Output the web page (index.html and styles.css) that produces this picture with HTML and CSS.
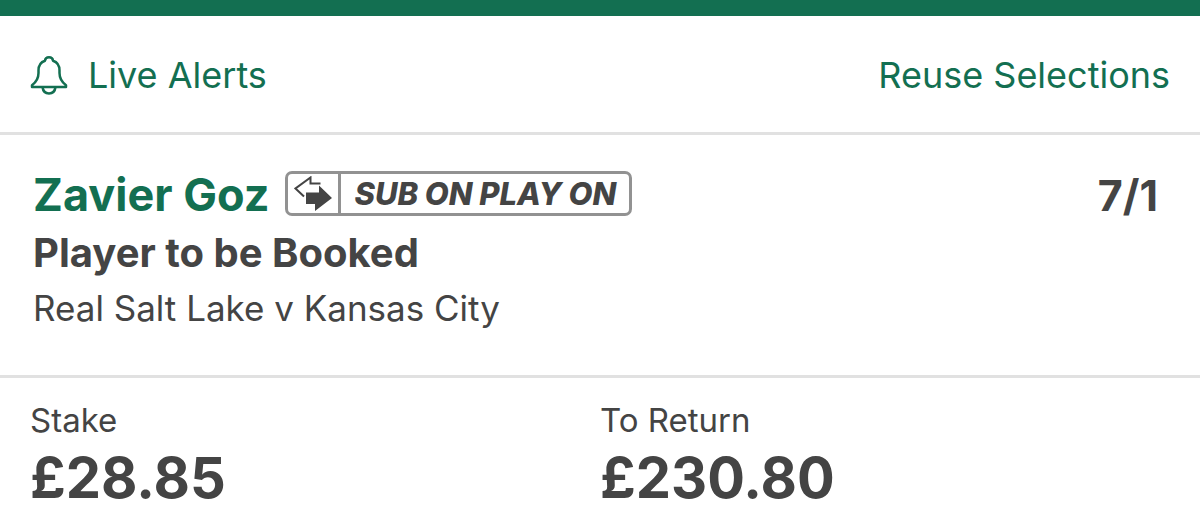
FILE: index.html
```html
<!DOCTYPE html>
<html lang="en">
<head>
    <meta charset="UTF-8">
    <meta name="viewport" content="width=device-width, initial-scale=1.0">
    <title>My Bets</title>
    <link rel="stylesheet" href="styles.css">
</head>
<body>
    <div class="bet">
        <div class="bet-header">
            <button type="button" class="header-button">
                <svg class="bell" viewBox="0 0 38 40" aria-hidden="true">
                    <path d="M2 32V30.200C7 26.500 8.500 23.500 8.500 18V15.500C8.500 10 11 7 15 5.700C15.200 3.500 16.500 2.300 19 2.300S22.800 3.500 23 5.700C27 7 29.500 10 29.500 15.500V18C29.500 23.500 31 26.500 36 30.200V32Z"/>
                    <path d="M12.500 32C13 36 15.500 38.500 19 38.500S25 36 25.500 32"/>
                </svg>
                Live Alerts
            </button>
            <button type="button" class="header-button">Reuse Selections</button>
        </div>
        <div class="selection">
            <div class="selection-row">
                <span class="player">Zavier Goz</span>
                <span class="badge">
                    <span class="badge-icon">
                        <svg class="arrows" viewBox="0 0 38 36" aria-hidden="true">
                            <path class="arrow-out" d="M10 20.500L1.500 12.500L16.500 1.500V7.500H26.500"/>
                            <path class="arrow-in" d="M12 16.500H25V9.500L38 22L21 35V28H12Z"/>
                        </svg>
                    </span>
                    <span class="badge-text">SUB ON PLAY ON</span>
                </span>
                <span class="odds">7/1</span>
            </div>
            <div class="market">Player to be Booked</div>
            <div class="fixture">Real Salt Lake v Kansas City</div>
        </div>
        <div class="totals">
            <div class="total">
                <div class="total-label">Stake</div>
                <div class="total-value">£28.85</div>
            </div>
            <div class="total">
                <div class="total-label">To Return</div>
                <div class="total-value">£230.80</div>
            </div>
        </div>
    </div>
</body>
</html>
```
FILE: styles.css
```css
body {
    margin: 0;
    background-color: #fff;
    color: #444;
    font-family: Inter, "Liberation Sans", sans-serif;
}
.bet {
    border-top: 16px solid #136f51;
}
.bet-header {
    display: flex;
    justify-content: space-between;
    align-items: center;
    padding: 35px 30px 33px;
    border-bottom: 3px solid #e1e1e1;
}
.header-button {
    display: flex;
    align-items: center;
    gap: 20px;
    padding: 0;
    border: none;
    background: none;
    color: #136f51;
    font-family: inherit;
    font-size: 36px;
    line-height: 48px;
    cursor: pointer;
}
.bell {
    width: 38px;
    height: 40px;
    fill: none;
    stroke: #136f51;
    stroke-width: 2.5;
    stroke-linejoin: round;
}
.selection {
    padding: 36px 42px 38px 33px;
    border-bottom: 3px solid #e1e1e1;
}
.selection-row {
    display: flex;
    align-items: flex-start;
    gap: 16px;
    line-height: 48px;
    font-size: 45px;
    font-weight: 700;
}
.player {
    color: #136f51;
}
.badge {
    display: flex;
    box-sizing: border-box;
    height: 45px;
    border: 3px solid #929292;
    border-radius: 7px;
}
.badge-icon {
    display: flex;
    align-items: center;
    padding: 0 6px;
    border-right: 3px solid #929292;
}
.arrows {
    width: 38px;
    height: 36px;
}
.arrow-out {
    fill: none;
    stroke: #444;
    stroke-width: 2;
}
.arrow-in {
    fill: #444;
}
.badge-text {
    padding: 0 13px;
    font-size: 31px;
    font-style: italic;
    font-weight: 800;
    line-height: 39px;
}
.odds {
    margin-left: auto;
    font-size: 43px;
}
.market {
    margin-top: 6px;
    font-size: 40px;
    font-weight: 700;
    line-height: 56px;
}
.fixture {
    font-size: 35px;
    line-height: 54px;
    margin-bottom: 2px;
}
.totals {
    display: grid;
    grid-template-columns: 1fr 1fr;
    padding: 22px 30px;
}
.total-label {
    font-size: 33px;
    line-height: 40px;
}
.total-value {
    margin-top: 6px;
    font-size: 56px;
    font-weight: 700;
    line-height: 64px;
}
```
